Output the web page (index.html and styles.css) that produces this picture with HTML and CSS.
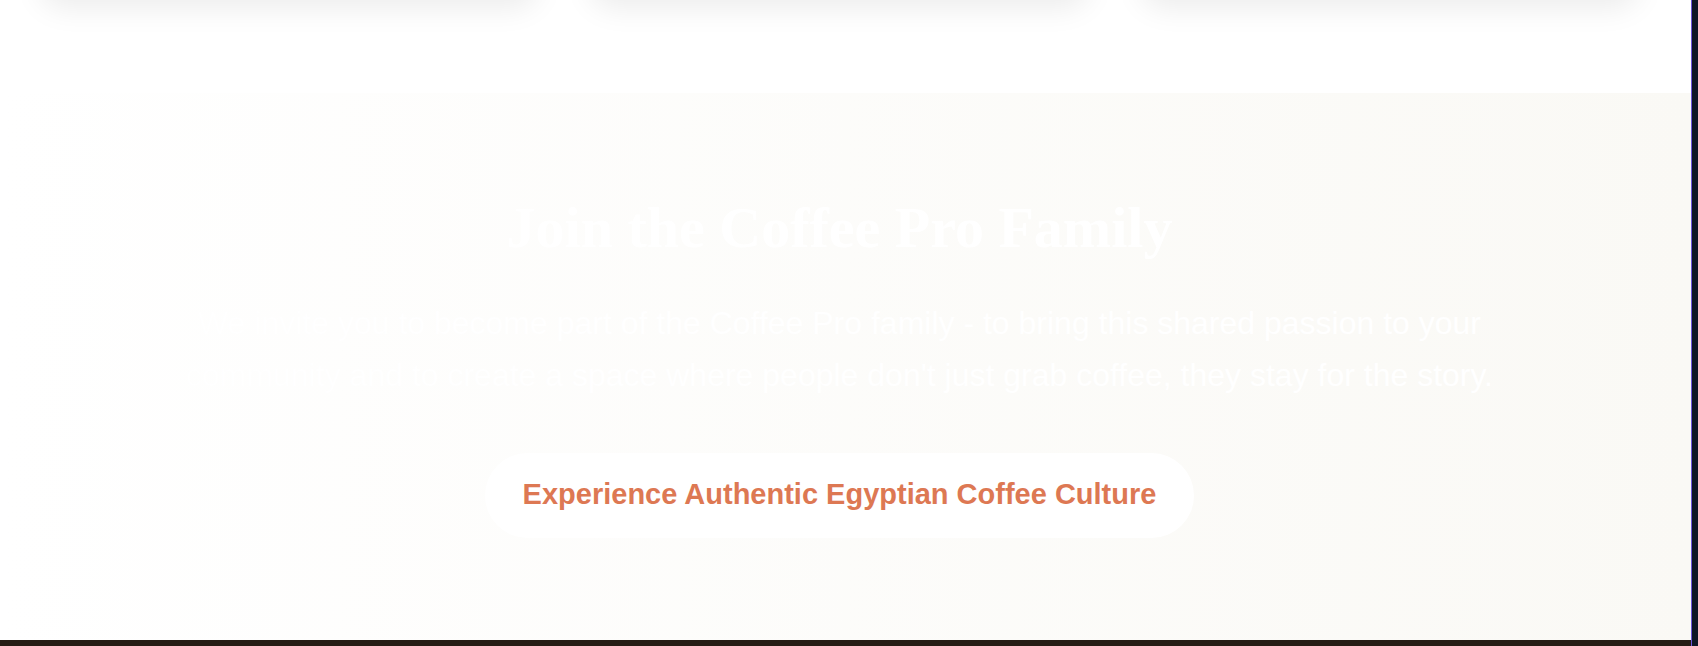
FILE: index.html
```html
<!DOCTYPE html>
<html lang="en">
<head>
<meta charset="utf-8">
<title>Coffee Pro</title>
<link rel="stylesheet" href="styles.css">
</head>
<body>
<div class="page">
  <main class="content">
    <section class="cards">
      <div class="card"></div>
      <div class="card"></div>
      <div class="card"></div>
    </section>
    <section class="join">
      <h2 class="join-title">Join the Coffee Pro Family</h2>
      <p class="join-text">We invite you to become part of the Coffee Pro family - to bring this shared passion to your community and to create a space where people don't just grab coffee, they stay for the story.</p>
      <a class="join-button" href="#experience">Experience Authentic Egyptian Coffee Culture</a>
    </section>
    <footer class="footer"></footer>
  </main>
  <aside class="rail"></aside>
</div>
</body>
</html>
```
FILE: styles.css
```css
* {
  box-sizing: border-box;
}

body {
  margin: 0;
  background: #ffffff;
  font-family: "Liberation Sans", Arial, sans-serif;
}

.page {
  display: flex;
  min-height: 100vh;
  overflow: hidden;
}

.content {
  flex: 1;
  display: flex;
  flex-direction: column;
}

/* The cards are scrolled out above the top edge; their shadows remain. */
.cards {
  display: grid;
  grid-template-columns: repeat(3, 1fr);
  gap: 52px;
  margin-top: -120px;
  padding: 0 52px 93px 40px;
}

.card {
  height: 120px;
  border-radius: 24px;
  background: #ffffff;
  box-shadow: 0 8px 30px rgba(0, 0, 0, 0.08);
}

.join {
  flex: 1;
  display: flex;
  flex-direction: column;
  align-items: center;
  padding: 100px 52px 100px 40px;
  background: linear-gradient(90deg, #ffffff 0%, #faf9f5 100%);
  color: #ffffff;
  text-align: center;
}

.join-title {
  margin: 0 0 34px;
  font-family: "Liberation Serif", "Times New Roman", serif;
  font-size: 58px;
  line-height: 70px;
}

.join-text {
  max-width: 1340px;
  margin: 0 0 52px;
  font-size: 32px;
  line-height: 52px;
}

.join-button {
  padding: 24px 38px 26px;
  border-radius: 48px;
  background: #ffffff;
  color: #dd7853;
  font-size: 29px;
  font-weight: bold;
  line-height: 35px;
  text-decoration: none;
}

.footer {
  height: 6px;
  background: #261b14;
}

.rail {
  width: 7px;
  border-left: 1px solid #6d56dc;
  background: #0f1626;
}
```
